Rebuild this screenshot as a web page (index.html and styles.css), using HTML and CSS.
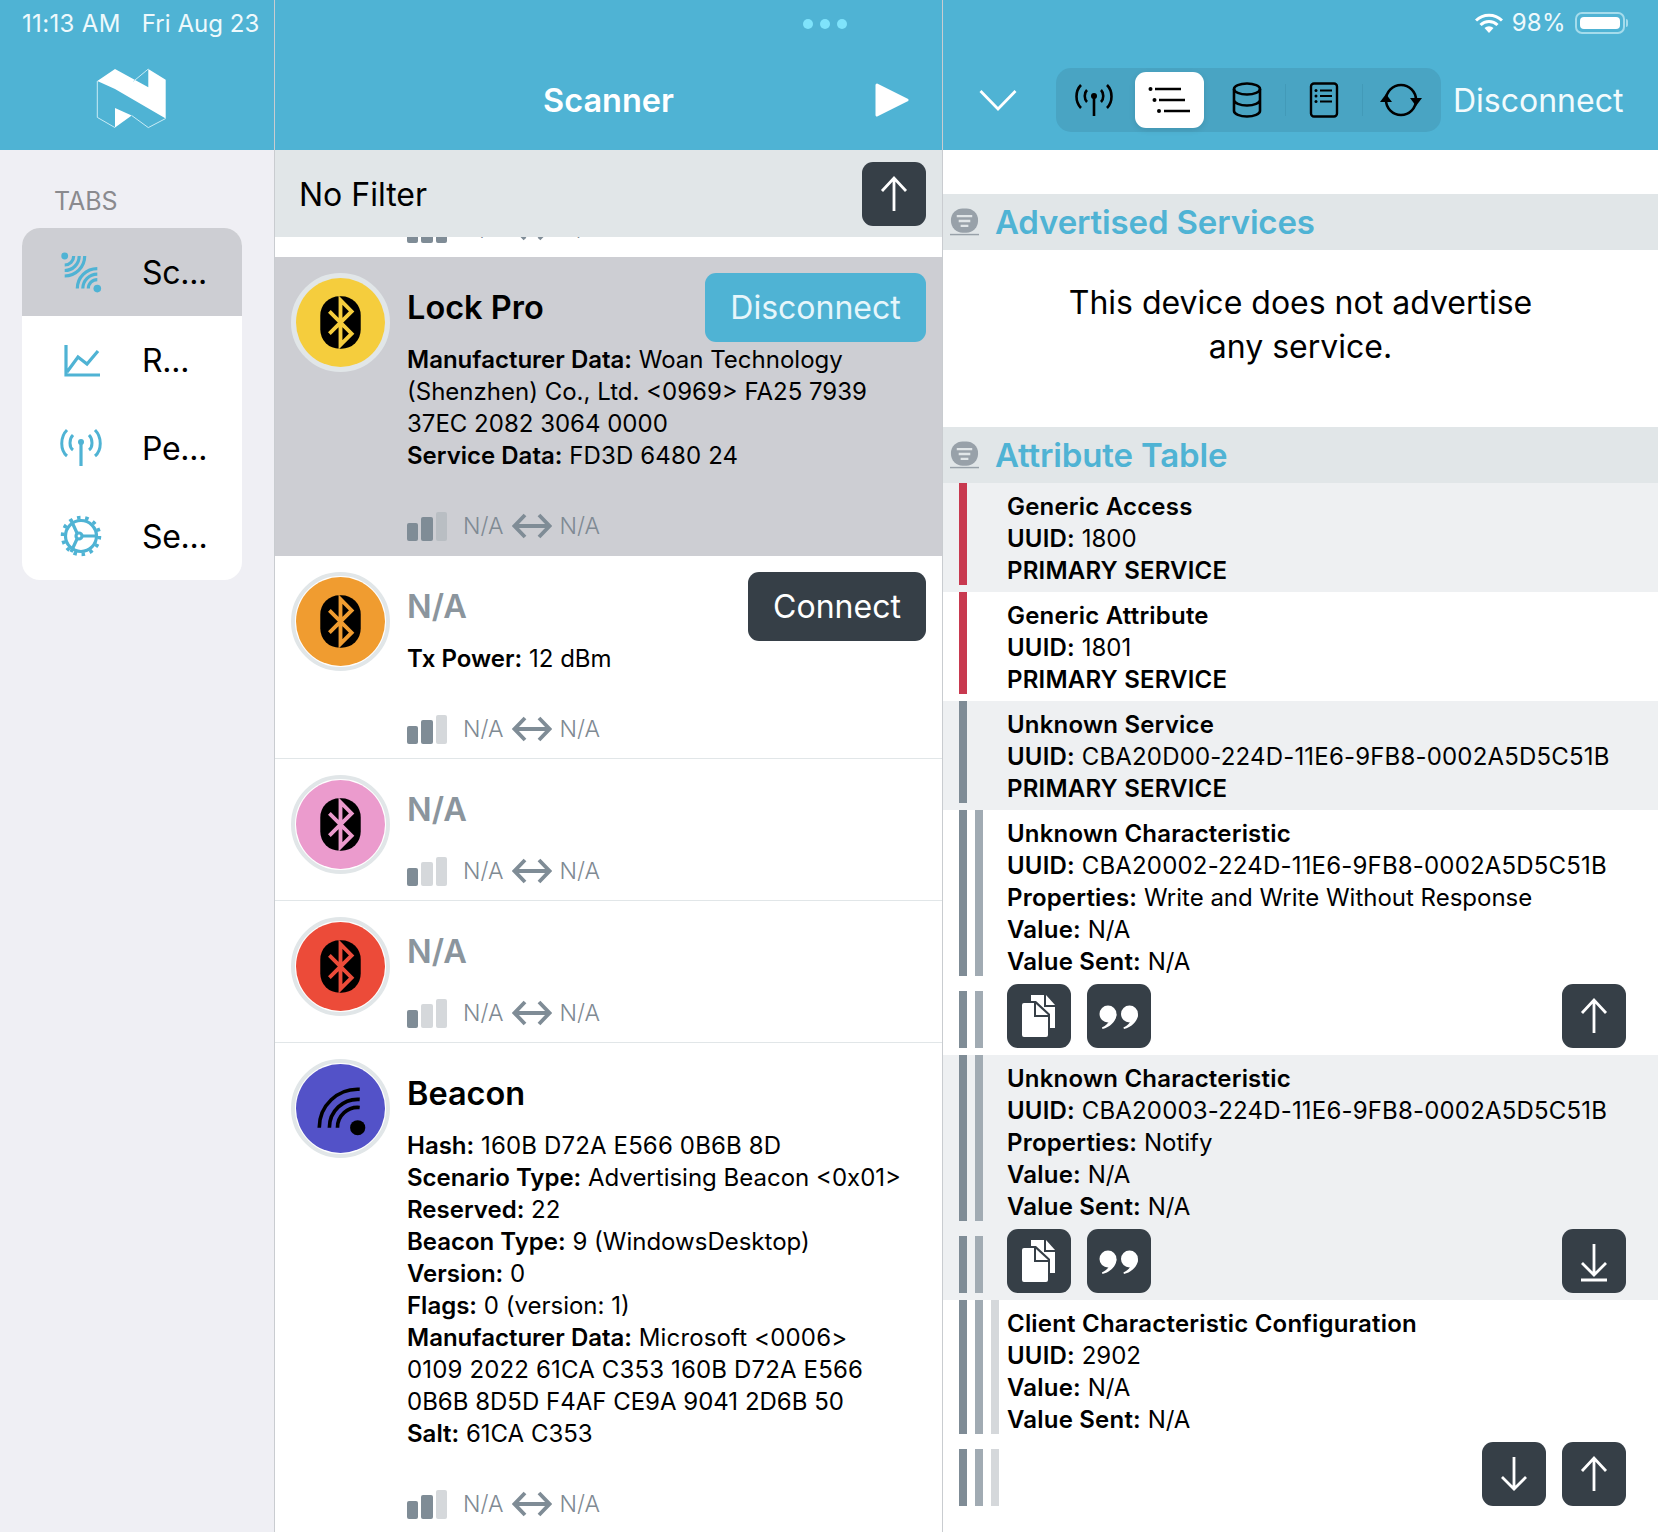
FILE: index.html
```html
<!DOCTYPE html>
<html lang="en">
<head>
  <meta charset="UTF-8">
  <title>Scanner</title>
  <link rel="stylesheet" href="styles.css">
</head>
<body>
  <svg class="defs" width="0" height="0">
    <symbol id="bt" viewBox="0 0 88 88">
      <circle cx="44" cy="44" r="44" fill="currentColor"/>
      <rect x="24" y="18" width="40" height="52" rx="19" fill="#000"/>
      <path d="M33 33l22 22-11 11V22l11 11-22 22" fill="none" stroke="currentColor" stroke-width="3.800"/>
    </symbol>
    <symbol id="copy" viewBox="0 0 64 64">
      <path d="M24 11h13v12h11v21h-5V30L29 17h-5z" fill="#fff"/>
      <path d="M39 11l9 10h-9z" fill="#fff"/>
      <path d="M17 19h10v14h14v18a2 2 0 0 1-2 2H17a2 2 0 0 1-2-2V21a2 2 0 0 1 2-2z" fill="#fff"/>
      <path d="M29 20l12 11H29z" fill="#fff"/>
    </symbol>
    <symbol id="quote" viewBox="0 0 64 64">
      <g fill="#fff">
        <circle cx="21" cy="30" r="8.500"/>
        <path d="M29.500 30c0 7-6 13-14 15l-.6-1.600c4-1.600 7-4.400 8-8.400z"/>
        <circle cx="42.500" cy="30" r="8.500"/>
        <path d="M51 30c0 7-6 13-14 15l-.6-1.600c4-1.600 7-4.400 8-8.400z"/>
      </g>
    </symbol>
    <symbol id="up" viewBox="0 0 64 64">
      <path d="M32 49V16M20 29l12-13 12 13" fill="none" stroke="#fff" stroke-width="2.800"/>
    </symbol>
    <symbol id="down" viewBox="0 0 64 64">
      <path d="M32 15v32M20 35l12 12 12-12" fill="none" stroke="#fff" stroke-width="2.800"/>
    </symbol>
    <symbol id="down-line" viewBox="0 0 64 64">
      <path d="M32 15v31M20 34l12 12 12-12M19 51h26" fill="none" stroke="#fff" stroke-width="2.800"/>
    </symbol>
    <symbol id="both" viewBox="0 0 40 26">
      <path d="M13 2L2.500 13 13 24M27 2l10.500 11L27 24M3 13h34" fill="none" stroke="#7f8c96" stroke-width="3.800"/>
    </symbol>
    <symbol id="sec" viewBox="0 0 30 28">
      <rect x="1" y="0" width="28" height="25" rx="12" fill="#98a1a9"/>
      <path d="M7 8h16M9 13h12M11 18h8" stroke="#e1e6e8" stroke-width="2.400"/>
      <path d="M0 27h30" stroke="#98a1a9" stroke-width="1.500"/>
    </symbol>
  </svg>

  <div class="app">
    <aside class="col side">
      <header class="head">
        <div class="status"><span>11:13 AM</span><span class="date">Fri Aug 23</span></div>
        <div class="logo-row">
          <svg class="logo" viewBox="96 68 72 62" width="72" height="62">
            <path d="M97.300 82L115 70l33.300 18.300V70l17.400 10.800v38.700L115 90 97.300 82z" fill="#fff"/>
            <path d="M115 109v19.600l16.700-12.100z" fill="#fff"/>
            <path d="M97.300 82v36.400L115 128.600M131.700 116.500l16.600 12.100 17.400-9.100M133 82.700L148.300 70" fill="none" stroke="#c9ecf6" stroke-width="1"/>
          </svg>
        </div>
      </header>
      <div class="tabs-label">TABS</div>
      <nav class="tabs">
        <div class="tab on">
          <svg class="tab-ico" viewBox="0 0 44 44" fill="none" stroke="#4fb3d4" stroke-width="3.200">
            <circle cx="5.700" cy="6" r="3.400" fill="#4fb3d4" stroke="none"/>
            <path d="M14.700 6A9 9 0 0 1 5.700 15M20.200 6A14.500 14.500 0 0 1 5.700 20.500M25.700 6A20 20 0 0 1 5.700 26"/>
            <circle cx="38.300" cy="38.600" r="3.800" fill="#4fb3d4" stroke="none"/>
            <path d="M29.300 38.600A9 9 0 0 1 38.300 29.600M23.800 38.600A14.500 14.500 0 0 1 38.300 24.100M18.300 38.600A20 20 0 0 1 38.300 18.600"/>
          </svg>
          <span>Sc...</span>
        </div>
        <div class="tab">
          <svg class="tab-ico" viewBox="0 0 44 44" fill="none" stroke="#4fb3d4" stroke-width="3.200">
            <path d="M7 7v30h34M8 34l11-15 9 7 11-13"/>
          </svg>
          <span>R...</span>
        </div>
        <div class="tab">
          <svg class="tab-ico" viewBox="0 0 44 44" fill="none" stroke="#4fb3d4" stroke-width="3">
            <circle cx="22" cy="16" r="3" fill="#4fb3d4" stroke="none"/>
            <path d="M22 16v24" stroke-width="3.200"/>
            <path d="M14 9c-4 4-4 12 0 15M30 9c4 4 4 12 0 15M8 4c-7 7-7 20 0 26M36 4c7 7 7 20 0 26"/>
          </svg>
          <span>Pe...</span>
        </div>
        <div class="tab">
          <svg class="tab-ico" viewBox="0 0 44 44" fill="none" stroke="#4fb3d4" stroke-width="3.200">
            <circle cx="22" cy="22" r="15.500"/>
            <circle cx="22" cy="22" r="18.500" stroke-width="3.500" stroke-dasharray="3.500 4.760"/>
            <circle cx="20" cy="22" r="3"/>
            <path d="M23 22h15M18 19l-6-13M18 25l-6 13"/>
          </svg>
          <span>Se...</span>
        </div>
      </nav>
    </aside>

    <main class="col middle">
      <header class="head">
        <div class="status status-dots"><i></i><i></i><i></i></div>
        <div class="title-row">
          <h1 class="title">Scanner</h1>
          <svg class="play" viewBox="0 0 34 36" width="34" height="36">
            <path d="M2 3l30 15L2 33z" fill="#fff" stroke="#fff" stroke-width="3" stroke-linejoin="round"/>
          </svg>
        </div>
      </header>
      <div class="filter">
        <span class="filter-label">No Filter</span>
        <button class="btn"><svg><use href="#up"/></svg></button>
      </div>
      <div class="list">
        <div class="clipped">
          <div class="signal">
            <span class="bars"><i class="b1 dark"></i><i class="b2 dark"></i><i class="b3 dark"></i></span>
            <span class="na">N/A</span><svg class="both"><use href="#both"/></svg><span class="na">N/A</span>
          </div>
        </div>

        <article class="device selected">
          <div class="avatar"><svg class="yellow"><use href="#bt"/></svg></div>
          <div class="body">
            <div class="top">
              <div class="name">Lock Pro</div>
              <button class="act act-blue">Disconnect</button>
            </div>
            <p class="data"><b>Manufacturer Data:</b> Woan Technology<br>(Shenzhen) Co., Ltd. &lt;0969&gt; FA25 7939<br>37EC 2082 3064 0000<br><b>Service Data:</b> <span class="hex">FD3D 6480 24</span></p>
            <div class="signal">
              <span class="bars"><i class="b1 dark"></i><i class="b2 dark"></i><i class="b3 light"></i></span>
              <span class="na">N/A</span><svg class="both"><use href="#both"/></svg><span class="na">N/A</span>
            </div>
          </div>
        </article>

        <article class="device">
          <div class="avatar"><svg class="orange"><use href="#bt"/></svg></div>
          <div class="body">
            <div class="top">
              <div class="name muted">N/A</div>
              <button class="act act-dark">Connect</button>
            </div>
            <p class="data"><b>Tx Power:</b> 12 dBm</p>
            <div class="signal">
              <span class="bars"><i class="b1 dark"></i><i class="b2 dark"></i><i class="b3 light"></i></span>
              <span class="na">N/A</span><svg class="both"><use href="#both"/></svg><span class="na">N/A</span>
            </div>
          </div>
        </article>

        <article class="device">
          <div class="avatar"><svg class="pink"><use href="#bt"/></svg></div>
          <div class="body">
            <div class="top"><div class="name muted">N/A</div></div>
            <div class="signal">
              <span class="bars"><i class="b1 dark"></i><i class="b2 light"></i><i class="b3 light"></i></span>
              <span class="na">N/A</span><svg class="both"><use href="#both"/></svg><span class="na">N/A</span>
            </div>
          </div>
        </article>

        <article class="device">
          <div class="avatar"><svg class="red"><use href="#bt"/></svg></div>
          <div class="body">
            <div class="top"><div class="name muted">N/A</div></div>
            <div class="signal">
              <span class="bars"><i class="b1 dark"></i><i class="b2 light"></i><i class="b3 light"></i></span>
              <span class="na">N/A</span><svg class="both"><use href="#both"/></svg><span class="na">N/A</span>
            </div>
          </div>
        </article>

        <article class="device">
          <div class="avatar">
            <svg viewBox="0 0 88 88">
              <circle cx="44" cy="44" r="44" fill="#5352c8"/>
              <circle cx="61" cy="63" r="7.500" fill="#000"/>
              <path d="M23 63a38 38 0 0 1 40-38M33 63a28 28 0 0 1 30-28M41 63a20 20 0 0 1 22-20" fill="none" stroke="#000" stroke-width="3.600"/>
            </svg>
          </div>
          <div class="body">
            <div class="top"><div class="name">Beacon</div></div>
            <p class="data"><b>Hash:</b> <span class="hex">160B D72A E566 0B6B 8D</span><br><b>Scenario Type:</b> Advertising Beacon &lt;0x01&gt;<br><b>Reserved:</b> 22<br><b>Beacon Type:</b> 9 (WindowsDesktop)<br><b>Version:</b> 0<br><b>Flags:</b> 0 (version: 1)<br><b>Manufacturer Data:</b> <span class="hex">Microsoft &lt;0006&gt;</span><br><span class="hex">0109 2022 61CA C353 160B D72A E566</span><br>0B6B 8D5D F4AF CE9A 9041 2D6B 50<br><b>Salt:</b> 61CA C353</p>
            <div class="signal">
              <span class="bars"><i class="b1 dark"></i><i class="b2 dark"></i><i class="b3 light"></i></span>
              <span class="na">N/A</span><svg class="both"><use href="#both"/></svg><span class="na">N/A</span>
            </div>
          </div>
        </article>
      </div>
    </main>

    <section class="col detail">
      <header class="head">
        <div class="status status-right">
          <svg class="wifi" viewBox="0 0 28 20" width="28" height="20">
            <path d="M1 7.500a18.500 18.500 0 0 1 26 0M5.500 12a12 12 0 0 1 17 0" fill="none" stroke="#fff" stroke-width="3"/>
            <path d="M9.500 15a6.500 6.500 0 0 1 9 0L14 20z" fill="#fff"/>
          </svg>
          <span>98%</span>
          <span class="battery"><i></i></span>
        </div>
        <div class="toolbar">
          <svg class="chev" viewBox="0 0 38 22" width="38" height="22">
            <path d="M1.500 2L19 20 36.500 2" fill="none" stroke="#fff" stroke-width="2.800"/>
          </svg>
          <div class="seg">
            <div class="seg-item first">
              <svg viewBox="0 0 38 36" width="38" height="36" fill="none" stroke="#000" stroke-width="2.600">
                <circle cx="19" cy="14" r="3" fill="#000" stroke="none"/>
                <path d="M19 14v20M12 8c-3 3-3 9 0 12M26 8c3 3 3 9 0 12M6 3c-6 6-6 17 0 23M32 3c6 6 6 17 0 23"/>
              </svg>
            </div>
            <div class="seg-item active">
              <svg viewBox="0 0 44 30" width="44" height="30" fill="none" stroke="#000" stroke-width="2.400">
                <path d="M7 4h26M11 15h26M16 26h26"/>
                <circle cx="2.500" cy="4" r="2" fill="#000" stroke="none"/>
                <circle cx="6.500" cy="15" r="2" fill="#000" stroke="none"/>
                <circle cx="11" cy="26" r="2" fill="#000" stroke="none"/>
              </svg>
            </div>
            <div class="seg-item">
              <svg viewBox="0 0 30 36" width="30" height="36" fill="none" stroke="#000" stroke-width="2.600">
                <ellipse cx="15" cy="7" rx="13" ry="5.500"/>
                <path d="M2 7v22c0 3 6 5.500 13 5.500S28 32 28 29V7M2 18c0 3 6 5.500 13 5.500S28 21 28 18"/>
              </svg>
            </div>
            <div class="seg-item sep">
              <svg viewBox="0 0 30 36" width="30" height="36" fill="none" stroke="#000" stroke-width="2.400">
                <rect x="2" y="1.500" width="26" height="33" rx="3"/>
                <path d="M11 8.500h12M11 14h12M11 19.500h12" stroke-width="2"/>
                <circle cx="7" cy="8.500" r="1.500" fill="#000" stroke="none"/>
                <circle cx="7" cy="14" r="1.500" fill="#000" stroke="none"/>
                <circle cx="7" cy="19.500" r="1.500" fill="#000" stroke="none"/>
              </svg>
            </div>
            <div class="seg-item sep">
              <svg viewBox="0 0 42 36" width="42" height="36">
                <circle cx="21" cy="18" r="15" fill="none" stroke="#000" stroke-width="2.600"/>
                <path d="M0 20l6-8 6 8zM30 16l6 8 6-8z" fill="#000"/>
              </svg>
            </div>
          </div>
          <span class="disc">Disconnect</span>
        </div>
      </header>

      <div class="scroll">
        <h2 class="section"><svg class="sec-ico"><use href="#sec"/></svg>Advertised Services</h2>
        <p class="empty">This device does not advertise<br>any service.</p>
        <h2 class="section"><svg class="sec-ico"><use href="#sec"/></svg>Attribute Table</h2>

        <div class="attr alt">
          <div class="attr-main">
            <div class="levels"><i class="l-red"></i></div>
            <div class="attr-text"><b>Generic Access</b><br><b>UUID:</b> 1800<br><b>PRIMARY SERVICE</b></div>
          </div>
        </div>
        <div class="attr">
          <div class="attr-main">
            <div class="levels"><i class="l-red"></i></div>
            <div class="attr-text"><b>Generic Attribute</b><br><b>UUID:</b> 1801<br><b>PRIMARY SERVICE</b></div>
          </div>
        </div>
        <div class="attr alt">
          <div class="attr-main">
            <div class="levels"><i class="l-1"></i></div>
            <div class="attr-text"><b>Unknown Service</b><br><b>UUID:</b> <span class="uuid">CBA20D00-224D-11E6-9FB8-0002A5D5C51B</span><br><b>PRIMARY SERVICE</b></div>
          </div>
        </div>

        <div class="attr">
          <div class="attr-main">
            <div class="levels"><i class="l-1"></i><i class="l-2"></i></div>
            <div class="attr-text"><b>Unknown Characteristic</b><br><b>UUID:</b> <span class="uuid">CBA20002-224D-11E6-9FB8-0002A5D5C51B</span><br><b>Properties:</b> Write and Write Without Response<br><b>Value:</b> N/A<br><b>Value Sent:</b> N/A</div>
          </div>
          <div class="attr-actions">
            <div class="levels"><i class="l-1"></i><i class="l-2"></i></div>
            <button class="btn"><svg><use href="#copy"/></svg></button>
            <button class="btn"><svg><use href="#quote"/></svg></button>
            <button class="btn push"><svg><use href="#up"/></svg></button>
          </div>
        </div>

        <div class="attr alt">
          <div class="attr-main">
            <div class="levels"><i class="l-1"></i><i class="l-2"></i></div>
            <div class="attr-text"><b>Unknown Characteristic</b><br><b>UUID:</b> <span class="uuid">CBA20003-224D-11E6-9FB8-0002A5D5C51B</span><br><b>Properties:</b> Notify<br><b>Value:</b> N/A<br><b>Value Sent:</b> N/A</div>
          </div>
          <div class="attr-actions">
            <div class="levels"><i class="l-1"></i><i class="l-2"></i></div>
            <button class="btn"><svg><use href="#copy"/></svg></button>
            <button class="btn"><svg><use href="#quote"/></svg></button>
            <button class="btn push"><svg><use href="#down-line"/></svg></button>
          </div>
        </div>

        <div class="attr">
          <div class="attr-main">
            <div class="levels"><i class="l-1"></i><i class="l-2"></i><i class="l-3"></i></div>
            <div class="attr-text"><b>Client Characteristic Configuration</b><br><b>UUID:</b> 2902<br><b>Value:</b> N/A<br><b>Value Sent:</b> N/A</div>
          </div>
          <div class="attr-actions">
            <div class="levels"><i class="l-1"></i><i class="l-2"></i><i class="l-3"></i></div>
            <button class="btn push"><svg><use href="#down"/></svg></button>
            <button class="btn"><svg><use href="#up"/></svg></button>
          </div>
        </div>
      </div>
    </section>
  </div>
</body>
</html>
```

FILE: styles.css
```css
* {
  box-sizing: border-box;
}
body {
  margin: 0;
  font-family: Inter, "Noto Sans", sans-serif;
  color: #000;
  background: #fff;
}
b {
  font-weight: 600;
}
.defs {
  position: absolute;
}
.app {
  display: grid;
  grid-template-columns: 275px 668px 715px;
  width: 1658px;
  height: 1532px;
  overflow: hidden;
}
.col {
  display: flex;
  flex-direction: column;
  min-width: 0;
  height: 1532px;
  overflow: hidden;
}

/* header */
.head {
  flex: none;
  height: 150px;
  background: #4fb3d4;
  color: #fff;
}
.status {
  display: flex;
  gap: 21px;
  height: 50px;
  padding-left: 22px;
  font-size: 24px;
  letter-spacing: 0.35px;
  line-height: 48px;
  color: #eef9fc;
}
.date {
  letter-spacing: 0.05px;
}
.status-dots {
  gap: 7px;
  padding: 19px 0 0 528px;
}
.status-dots i {
  width: 10px;
  height: 10px;
  border-radius: 50%;
  background: #7fe3fb;
}
.status-right {
  justify-content: flex-end;
  align-items: center;
  gap: 9px;
  height: 46px;
  margin-bottom: 4px;
  padding: 0 33px 0 0;
}
.battery {
  position: relative;
  width: 50px;
  height: 22px;
  padding: 3px;
  border: 2px solid #a5dcec;
  border-radius: 7px;
}
.battery::after {
  content: "";
  position: absolute;
  right: -5px;
  top: 5px;
  width: 2px;
  height: 8px;
  border-radius: 0 2px 2px 0;
  background: #a5dcec;
}
.battery i {
  display: block;
  height: 100%;
  border-radius: 4px;
  background: #fff;
}
.logo-row {
  display: flex;
  justify-content: center;
  padding: 17px 10px 0 0;
}
.title-row {
  position: relative;
  height: 100px;
  display: flex;
  align-items: center;
  justify-content: center;
}
.title {
  margin: 0;
  font-size: 32.500px;
  font-weight: 600;
}
.play {
  position: absolute;
  right: 33px;
  top: 32px;
}
.toolbar {
  display: flex;
  align-items: center;
  height: 100px;
  padding-left: 36px;
}
.chev {
  margin-right: 39px;
}
.seg {
  display: flex;
  width: 385px;
  height: 64px;
  margin-right: 12px;
  border-radius: 15px;
  background: #49a4c3;
}
.seg-item {
  position: relative;
  flex: none;
  width: 77px;
  display: flex;
  align-items: center;
  justify-content: center;
}
.seg-item.first {
  width: 75px;
}
.seg-item.active {
  width: 69px;
  margin: 4px;
  border-radius: 11px;
  background: #fff;
  box-shadow: 0 2px 6px rgba(0, 0, 0, 0.1);
}
.seg-item.sep::before {
  content: "";
  position: absolute;
  left: 0;
  top: 16px;
  height: 32px;
  border-left: 1px solid #429ab8;
}
.disc {
  font-size: 32px;
  color: #f2fbfd;
}

/* sidebar */
.side {
  background: #efeff4;
  border-right: 1px solid #c9ccd0;
}
.tabs-label {
  padding: 36px 0 12px 54px;
  font-size: 25px;
  line-height: 30px;
  color: #8a8a8e;
}
.tabs {
  width: 220px;
  margin-left: 22px;
  border-radius: 18px;
  overflow: hidden;
  background: #fff;
}
.tab {
  display: flex;
  align-items: center;
  height: 88px;
  padding-left: 37px;
  font-size: 32px;
  letter-spacing: -0.3px;
}
.tab.on {
  background: #cdced3;
}
.tab-ico {
  width: 44px;
  height: 44px;
  margin-right: 39px;
}

/* scanner list */
.middle {
  border-right: 1px solid #c9ccd0;
}
.filter {
  flex: none;
  display: flex;
  align-items: center;
  justify-content: space-between;
  height: 87px;
  padding: 0 16px 0 24px;
  font-size: 32px;
  background: #e1e6e8;
}
.filter-label {
  padding-top: 2px;
}
.btn {
  flex: none;
  width: 64px;
  height: 64px;
  padding: 0;
  border: none;
  border-radius: 11px;
  background: #363f47;
}
.btn svg {
  display: block;
  width: 64px;
  height: 64px;
}
.clipped {
  height: 20px;
  padding-left: 132px;
  overflow: hidden;
}
.clipped .signal {
  margin-top: -26px;
}
.device {
  display: flex;
  gap: 17px;
  padding: 16px 16px 12px;
  border-bottom: 1px solid #e1e6e8;
}
.device.selected {
  padding-bottom: 13px;
  background: #cdced3;
  border-bottom: none;
}
.avatar {
  flex: none;
  width: 99px;
  height: 99px;
  padding: 1px;
  border: 4px solid #e1e6e8;
  border-radius: 50%;
  background: #fff;
}
.selected .avatar {
  background: #e1e6e8;
}
.avatar svg {
  display: block;
  width: 89px;
  height: 89px;
}
.yellow { color: #f5cd3d; }
.orange { color: #f09c30; }
.pink { color: #eb9bcd; }
.red { color: #ec4b39; }
.body {
  flex: 1;
  min-width: 0;
}
.top {
  display: flex;
  align-items: center;
  justify-content: space-between;
  height: 69px;
}
.name {
  font-size: 32.500px;
  font-weight: 600;
}
.muted {
  color: #8b959d;
}
.act {
  min-width: 178px;
  height: 69px;
  padding: 0 24px;
  border: none;
  border-radius: 11px;
  font: inherit;
  font-size: 32px;
  color: #fff;
}
.act-blue {
  min-width: 221px;
  background: #4fb3d4;
  color: #e6f6fb;
}
.act-dark {
  background: #363f47;
}
.data {
  margin: 2px 0 37px;
  font-size: 24px;
  line-height: 32px;
}
.hex {
  letter-spacing: 0.15px;
}
.signal {
  display: flex;
  align-items: center;
  height: 34px;
  margin-top: 10px;
  font-size: 23px;
}
.bars {
  display: flex;
  align-items: flex-end;
  gap: 3px;
  width: 40px;
  height: 29px;
  margin-right: 16px;
}
.bars i {
  flex: 1;
  border-radius: 2px;
}
.b1 { height: 18px; }
.b2 { height: 24px; }
.b3 { height: 29px; }
.dark { background: #7f8c96; }
.light { background: #d5d8db; }
.selected .light { background: #b9bec3; }
.na {
  font-weight: 300;
  color: #7f8a93;
}
.both {
  width: 40px;
  height: 26px;
  margin: 0 7px 0 9px;
}

/* attribute table */
.scroll {
  flex: 1;
  padding-top: 44px;
  overflow: hidden;
}
.section {
  display: flex;
  align-items: center;
  gap: 16px;
  height: 56px;
  margin: 0;
  padding-left: 7px;
  font-size: 33px;
  font-weight: 600;
  letter-spacing: -0.15px;
  color: #4fb3d4;
  background: #e1e6e8;
}
.sec-ico {
  width: 29px;
  height: 28px;
}
.empty {
  height: 177px;
  margin: 0;
  padding-top: 31px;
  font-size: 32px;
  line-height: 44px;
  text-align: center;
}
.attr {
  padding: 0 32px 7px 16px;
}
.alt {
  background: #eef0f2;
}
.attr-main {
  display: flex;
}
.attr-text {
  margin-bottom: -2px;
  padding-top: 8px;
  font-size: 24px;
  line-height: 32px;
}
.attr-text b {
  letter-spacing: 0.2px;
}
.uuid {
  letter-spacing: 0.18px;
}
.levels {
  flex: none;
  display: flex;
  gap: 8px;
  width: 48px;
}
.levels i {
  width: 8px;
}
.l-red { background: #c8394f; }
.l-1 { background: #7f8c96; }
.l-2 { background: #a1abb3; }
.l-3 { background: #d5d8db; }
.attr-actions {
  display: flex;
  gap: 16px;
  margin-top: 8px;
}
.attr-actions .levels {
  margin: 7px -16px 0 0;
}
.push {
  margin-left: auto;
}
```
